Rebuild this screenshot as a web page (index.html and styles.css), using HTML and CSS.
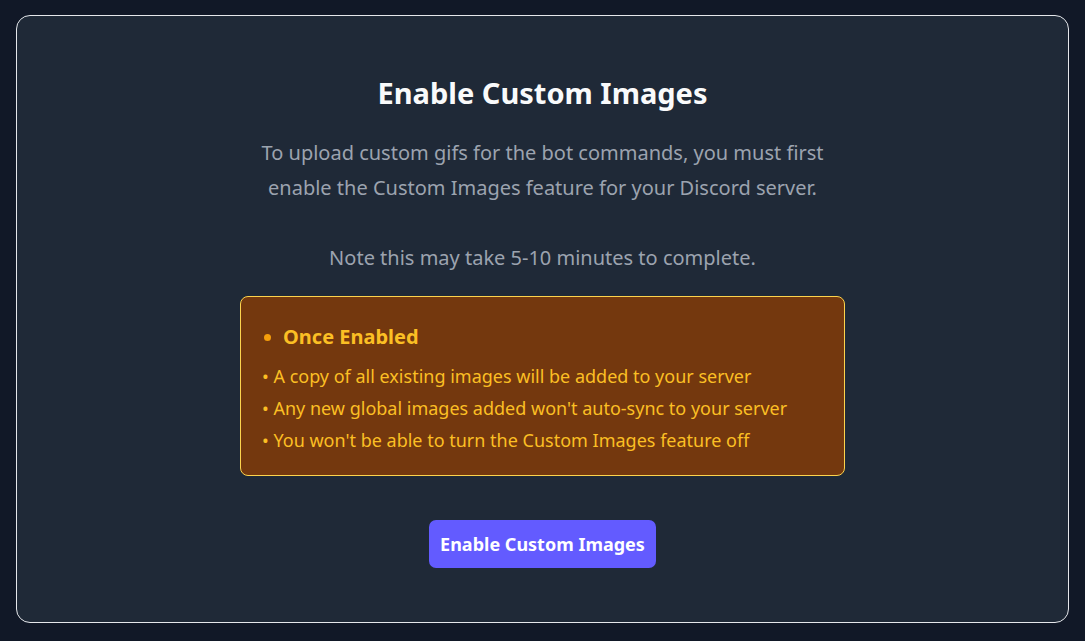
FILE: index.html
```html
<!DOCTYPE html>
<html>
<head>
<meta charset="utf-8">
<link rel="stylesheet" href="styles.css">
</head>
<body>
<main class="card">
  <h1 class="title">Enable Custom Images</h1>
  <p class="desc">To upload custom gifs for the bot commands, you must first enable the Custom Images feature for your Discord server.<br><br>Note this may take 5-10 minutes to complete.</p>
  <section class="notice">
    <h2 class="notice-title"><span class="dot"></span>Once Enabled</h2>
    <ul class="notice-list">
      <li>• A copy of all existing images will be added to your server</li>
      <li>• Any new global images added won't auto-sync to your server</li>
      <li>• You won't be able to turn the Custom Images feature off</li>
    </ul>
  </section>
  <button class="btn">Enable Custom Images</button>
</main>
</body>
</html>
```

FILE: styles.css
```css
* { box-sizing: border-box; }
html, body { margin: 0; height: 100%; }
body {
  background: #111827;
  padding: 15px 16px 18px 16px;
  font-family: "Noto Sans", "Open Sans", sans-serif;
}
.card {
  height: 608px;
  border: 1px solid #e5e7eb;
  border-radius: 14px;
  background: #1f2937;
  display: flex;
  flex-direction: column;
  align-items: center;
  padding: 57px 24px 0;
}
.title {
  margin: 0;
  font-size: 29px;
  line-height: 40px;
  font-weight: 700;
  color: #f9fafb;
}
.desc {
  margin: 22px 0 0;
  width: 600px;
  text-align: center;
  font-size: 20px;
  line-height: 35px;
  color: #9ca3af;
}
.notice {
  margin-top: 21px;
  width: 605px;
  height: 180px;
  border: 1px solid #fcd34d;
  border-radius: 8px;
  background: #74380e;
  padding: 24px 21px 20px;
  color: #fbbf24;
}
.notice-title {
  margin: 0;
  display: flex;
  align-items: center;
  font-size: 20px;
  line-height: 32px;
  font-weight: 700;
}
.dot {
  width: 7px;
  height: 7px;
  border-radius: 50%;
  background: #f59e0b;
  margin-right: 12px;
  margin-left: 2px;
}
.notice-list {
  list-style: none;
  margin: 7px 0 0;
  padding: 0;
  font-size: 18px;
  line-height: 32px;
}
.btn {
  margin-top: 44px;
  height: 48px;
  padding: 0 11px;
  border: none;
  border-radius: 7px;
  background: #635bff;
  color: #ffffff;
  font-family: inherit;
  font-size: 18px;
  font-weight: 700;
}
```
